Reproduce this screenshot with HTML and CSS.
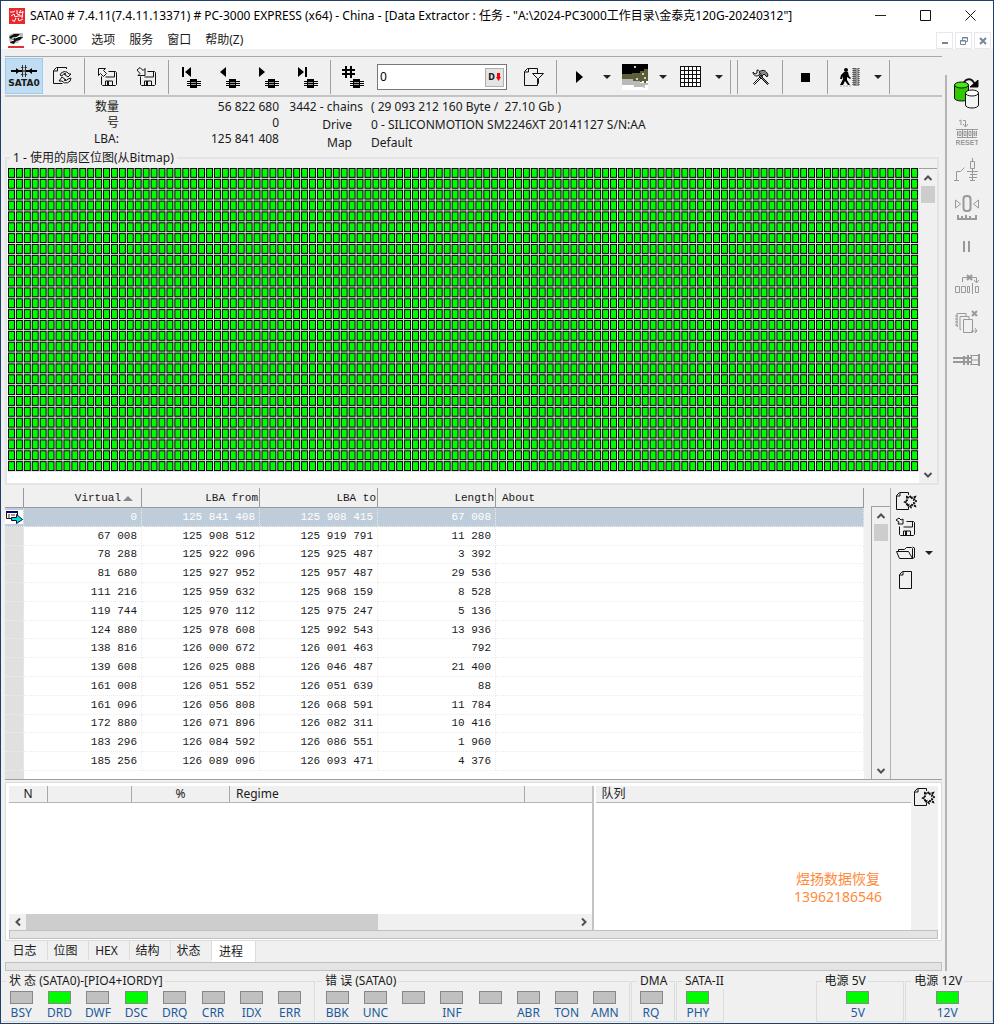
FILE: index.html
```html
<!DOCTYPE html>
<html lang="zh-CN">
<head>
    <meta charset="UTF-8">
    <meta name="viewport" content="width=device-width, initial-scale=1.0">
    <title>PC-3000 EXPRESS</title>
    <link rel="stylesheet" href="styles.css">
</head>
<body>
    <!-- shared icon shapes -->
    <svg class="sprite" aria-hidden="true">
        <symbol id="chip" viewBox="0 0 14 9">
            <path d="M0 2.5h14M0 4.5h14M0 6.5h14" stroke="#000" fill="none"/>
            <path d="M3 0h7v9h-7z" fill="#000"/>
            <path d="M4 3.5h5M4 5.5h5" stroke="#999" fill="none"/>
        </symbol>
        <symbol id="floppy" viewBox="0 0 16 15">
            <path d="M.5 5.5v8l1 1h13l1-1v-12l-1-1h-7M13.5 1v5h-9M4.5 14v-4h7v4" fill="none" stroke="#111"/>
            <path d="M6 10h2v4h-2z" fill="#111"/>
        </symbol>
        <symbol id="new-page" viewBox="0 0 22 20">
            <path d="M13.5 4V1.500h-9l-3 3v14h12v-3M1.500 5h3.500v-3" fill="none" stroke="#111"/>
            <path d="M12 6l2 1 2-2 1 2 3-1-1 3 2 1-2 2 1 3-3-1-1 2-2-2-2 1v-3l-2-1 2-2z" fill="#f0f0f0" stroke="#111" stroke-width="2" stroke-dasharray="2 1"/>
        </symbol>
        <symbol id="arrow-down" viewBox="0 0 8 4"><path d="M0 0h8l-4 4z" fill="#222"/></symbol>
        <symbol id="chevron" viewBox="0 0 10 8"><path d="M1.500 6l3.500-3.500 3.500 3.500" fill="none" stroke="#505050" stroke-width="2"/></symbol>
    </svg>

    <div class="window">
        <header class="title-bar">
            <svg width="16" height="16" viewBox="0 0 16 16">
                <rect width="16" height="16" fill="#e8282c"/>
                <path d="M1 4h3l2-1M2 8l3-2 1 3 3-1M8 2v4l3 1M12 2l-2 3 4-1M14 3l-1 7M9 8h5M7 10l-2 4M9 10l1 3 4-2M3 12l2 1" stroke="#fff" fill="none"/>
            </svg>
            <h1>SATA0 # 7.4.11(7.4.11.13371) # PC-3000 EXPRESS (x64) - China - [Data Extractor : 任务 - "A:\2024-PC3000工作目录\金泰克120G-20240312"]</h1>
            <div class="window-buttons">
                <button type="button" aria-label="Minimize"><svg width="11" height="11"><path d="M0 5.500h11" stroke="#222"/></svg></button>
                <button type="button" aria-label="Maximize"><svg width="11" height="11"><path d="M.5.5h10v10h-10z" fill="none" stroke="#111"/></svg></button>
                <button type="button" aria-label="Close"><svg width="11" height="11"><path d="M.5.5l10 10M10.500.5l-10 10" stroke="#111"/></svg></button>
            </div>
        </header>

        <nav class="menu-bar">
            <svg width="16" height="16" viewBox="0 0 16 16">
                <path d="M1 3l5-2h9v5l-3 1-2 4H2l-1-4z" fill="#bbb"/>
                <path d="M1 5l5-3h6l-3 3H5l-2 2zM4 8l4-3h7l-3 3-4 1-2 3-4-1z" fill="#111"/>
                <path d="M7 6l5-2M3 9l3-1" stroke="#fff"/>
                <path d="M0 15h16" stroke="#e03030" stroke-width="2"/>
            </svg>
            <button type="button">PC-3000</button>
            <button type="button">选项</button>
            <button type="button">服务</button>
            <button type="button">窗口</button>
            <button type="button">帮助(Z)</button>
            <div class="child-buttons">
                <button type="button" aria-label="Minimize child"><svg width="8" height="8"><path d="M1 6h6" stroke="#74879a" stroke-width="2"/></svg></button>
                <button type="button" aria-label="Restore child"><svg width="8" height="8"><path d="M2.500 3V.5h5v4H5M2 1h6M.5 3.500h5v4h-5zM0 4h6" fill="none" stroke="#74879a"/></svg></button>
                <button type="button" aria-label="Close child"><svg width="8" height="8"><path d="M1 1l6 6M7 1l-6 6" stroke="#74879a" stroke-width="2"/></svg></button>
            </div>
        </nav>

        <div class="workspace">
            <main class="main">
                <div class="toolbar">
                    <div class="tool-group first">
                        <button type="button" class="tool active">
                            <svg width="26" height="13" viewBox="0 0 26 13"><path d="M0 6h26" stroke="#000" stroke-width="2"/><path d="M5 3l4 3-4 3zM21 3l-4 3 4 3z"/><path d="M10 2.500h6M10 9.500h6M11.500 0v12M14.500 0v12" stroke="#333"/><path d="M13 2v8" stroke="#ccc"/></svg>
                            <span>SATA0</span>
                        </button>
                        <button type="button" class="tool" aria-label="Refresh">
                            <svg width="22" height="20" viewBox="0 0 22 20" fill="none" stroke="#111"><path d="M14.500 3V1.500h-10l-3 3v13h9M1.500 5h4V2"/><path d="M8 9a5 5 0 0 1 9-1h2l-3 3-4-3h2a3 3 0 0 0-4 2zM19 12a5 5 0 0 1-9 3H7l3-4 4 3h-2a3 3 0 0 0 4-1z"/></svg>
                        </button>
                    </div>
                    <div class="tool-group">
                        <button type="button" class="tool" aria-label="Export">
                            <svg width="20" height="20"><use href="#floppy" x="4" y="4" width="16" height="15"/><path d="M1.500 1.500h7l-2 2 3 3-3 3-3-3-2 2z" fill="#f0f0f0" stroke="#111"/></svg>
                        </button>
                        <button type="button" class="tool" aria-label="Save">
                            <svg width="20" height="20"><use href="#floppy" x="4" y="4" width="16" height="15"/><path d="M1 3l3-2.500 3 3 2-2v7H2l2-2z" fill="#f0f0f0" stroke="#111"/></svg>
                        </button>
                    </div>
                    <div class="tool-group">
                        <button type="button" class="tool" aria-label="First"><svg width="20" height="22"><path d="M1 1h2v10h-2zM10 1v10l-6-5z"/><use href="#chip" x="6" y="13" width="14" height="9"/></svg></button>
                        <button type="button" class="tool" aria-label="Previous"><svg width="20" height="22"><path d="M6 1v10l-6-5z"/><use href="#chip" x="6" y="13" width="14" height="9"/></svg></button>
                        <button type="button" class="tool" aria-label="Next"><svg width="20" height="22"><path d="M0 1v10l6-5z"/><use href="#chip" x="6" y="13" width="14" height="9"/></svg></button>
                        <button type="button" class="tool" aria-label="Last"><svg width="20" height="22"><path d="M0 1v10l6-5zM7 1h2v10H7z"/><use href="#chip" x="6" y="13" width="14" height="9"/></svg></button>
                    </div>
                    <div class="tool-group">
                        <button type="button" class="tool" aria-label="Go to sector"><svg width="22" height="22"><path d="M4 0v12M9 0v12M0 4h13M0 8h13" stroke="#000" stroke-width="2"/><use href="#chip" x="8" y="13" width="14" height="9"/></svg></button>
                        <div class="sector-box">
                            <input type="text" value="0" aria-label="Sector">
                            <button type="button">D<svg width="5" height="8"><path d="M1 0h3v4h1L2.500 8 0 4h1z" fill="#f00"/></svg></button>
                        </div>
                        <button type="button" class="tool" aria-label="Filter"><svg width="22" height="20" fill="none" stroke="#111"><path d="M14.500 6V1.500h-10l-3 3v14h13v-3M1.500 5h4V2"/><path d="M9.500 6.500h11l-5 5v5l-1-1v-4z" fill="#f0f0f0"/></svg></button>
                    </div>
                    <div class="tool-group">
                        <button type="button" class="tool" aria-label="Run"><svg width="7" height="12"><path d="M0 0l7 6-7 6z"/></svg></button>
                        <button type="button" class="more" aria-label="Run options"><svg width="8" height="4"><use href="#arrow-down"/></svg></button>
                        <button type="button" class="tool" aria-label="Sector map">
                            <svg width="26" height="26" shape-rendering="crispEdges"><path d="M0 0h26v26H0z" fill="#fff"/><path d="M0 0h26v12H0z"/><path d="M0 10h10V9h8V7h4V5h4v12H0z" fill="#5d5d39"/><path d="M0 15h11v2h7v2h8v2h-3v2H12v-2H0z" fill="#b9b9b9"/><path d="M12 2h2v2h-2zM20 9h2v2h-2zM14 14h2v2h-2zM22 13h2v2h-2zM21 22h2v2h-2z" fill="#ccc"/><path d="M16 12h2v2h-2zM18 16h2v2h-2zM22 17h2v2h-2z" fill="#5d5d39"/></svg>
                        </button>
                        <button type="button" class="more" aria-label="Map options"><svg width="8" height="4"><use href="#arrow-down"/></svg></button>
                        <button type="button" class="tool" aria-label="Grid"><svg width="22" height="22" shape-rendering="crispEdges"><path d="M1 1h20v20H1z" fill="#fff"/><path d="M.5.5h20v20H.5zM4.500 0v21M8.500 0v21M12.500 0v21M16.500 0v21M0 4.500h21M0 8.500h21M0 12.500h21M0 16.500h21" fill="none" stroke="#111"/></svg></button>
                        <button type="button" class="more" aria-label="Grid options"><svg width="8" height="4"><use href="#arrow-down"/></svg></button>
                    </div>
                    <div class="tool-group blank"></div>
                    <div class="tool-group">
                        <button type="button" class="tool" aria-label="Tools"><svg width="17" height="16" fill="none" stroke="#111"><path d="M1.500 14.500l8-8 1 1-8 8z" fill="#fff"/><path d="M6.500 6.500l1-1 9 9-1 1z" fill="#888"/><path d="M1 3l2 2 2-1V1c3 0 4 3 2 5S1 7 1 3z" fill="#ddd"/><path d="M7 3c4-3 7-2 9 3l-1 2-3-3-2 2-2-3z" fill="#888"/></svg></button>
                    </div>
                    <div class="tool-group">
                        <button type="button" class="tool" aria-label="Stop"><svg width="9" height="9"><path d="M0 0h9v9H0z"/></svg></button>
                    </div>
                    <div class="tool-group">
                        <button type="button" class="tool" aria-label="Exit"><svg width="20" height="20"><circle cx="6" cy="3" r="2"/><path d="M4 5h4l1 4 2 2-1 1-3-2v3l3 5H8l-3-4-2 4H0l3-6V9l-1 3H0l1-4z"/><path d="M13 1h6v18h-6z" fill="#999"/><path d="M13 1v18M19 1v18M15 1v18" stroke="#222" stroke-dasharray="1 1"/><path d="M0 19h12" stroke="#aaa" stroke-dasharray="2 1"/></svg></button>
                        <button type="button" class="more" aria-label="Exit options"><svg width="8" height="4"><use href="#arrow-down"/></svg></button>
                    </div>
                </div>

                <section class="info">
                    <dl class="counts">
                        <dt>数量</dt><dd>56 822 680</dd>
                        <dt>号</dt><dd>0</dd>
                        <dt>LBA:</dt><dd>125 841 408</dd>
                    </dl>
                    <dl class="device">
                        <dt class="wide">3442 - chains</dt><dd>( 29 093 212 160 Byte /&nbsp; 27.10 Gb )</dd>
                        <dt>Drive</dt><dd>0 - SILICONMOTION SM2246XT 20141127 S/N:AA</dd>
                        <dt>Map</dt><dd>Default</dd>
                    </dl>
                </section>

                <fieldset class="bitmap">
                    <legend>1 - 使用的扇区位图(从Bitmap)</legend>
                    <div class="bitmap-body">
                        <svg class="cells" viewBox="0 0 920 308" preserveAspectRatio="none">
                            <defs>
                                <pattern id="cell" width="8" height="11" patternUnits="userSpaceOnUse">
                                    <rect width="8" height="11" fill="#e4e4e4"/>
                                    <rect width="7" height="10" fill="#000"/>
                                    <rect x="1" y="1" width="5" height="8" fill="#00fc00"/>
                                </pattern>
                            </defs>
                            <rect width="920" height="308" fill="url(#cell)"/>
                        </svg>
                        <div class="scroll">
                            <button type="button" aria-label="Scroll up"><svg width="10" height="8"><use href="#chevron"/></svg></button>
                            <div class="thumb"></div>
                            <button type="button" class="down" aria-label="Scroll down"><svg width="10" height="8"><use href="#chevron"/></svg></button>
                        </div>
                    </div>
                </fieldset>

                <section class="chains">
                    <div class="chains-table">
                        <table>
                            <colgroup><col class="mark"><col class="num"><col class="num"><col class="num"><col class="num"><col></colgroup>
                            <thead>
                                <tr><th></th><th class="sorted">Virtual<svg width="10" height="5"><path d="M5 0l5 5H0z" fill="#888"/></svg></th><th>LBA from</th><th>LBA to</th><th>Length</th><th class="about">About</th></tr>
                            </thead>
                            <tbody>
                                <tr class="selected"><td><svg width="18" height="14" viewBox="0 0 18 14"><path d="M1.500 1.500h11v7h-11z" fill="#fff" stroke="#111"/><path d="M1 1h12v2H1z" fill="#000080"/><path d="M3 5h2M6 5h4M3 7h2" stroke="#333"/><path d="M6.500 7.500h5v-3l6 5-6 4v-3h-5z" fill="#00e0e8" stroke="#111"/></svg></td><td>0</td><td>125 841 408</td><td>125 908 415</td><td>67 008</td><td></td></tr>
                                <tr><td></td><td>67 008</td><td>125 908 512</td><td>125 919 791</td><td>11 280</td><td></td></tr>
                                <tr><td></td><td>78 288</td><td>125 922 096</td><td>125 925 487</td><td>3 392</td><td></td></tr>
                                <tr><td></td><td>81 680</td><td>125 927 952</td><td>125 957 487</td><td>29 536</td><td></td></tr>
                                <tr><td></td><td>111 216</td><td>125 959 632</td><td>125 968 159</td><td>8 528</td><td></td></tr>
                                <tr><td></td><td>119 744</td><td>125 970 112</td><td>125 975 247</td><td>5 136</td><td></td></tr>
                                <tr><td></td><td>124 880</td><td>125 978 608</td><td>125 992 543</td><td>13 936</td><td></td></tr>
                                <tr><td></td><td>138 816</td><td>126 000 672</td><td>126 001 463</td><td>792</td><td></td></tr>
                                <tr><td></td><td>139 608</td><td>126 025 088</td><td>126 046 487</td><td>21 400</td><td></td></tr>
                                <tr><td></td><td>161 008</td><td>126 051 552</td><td>126 051 639</td><td>88</td><td></td></tr>
                                <tr><td></td><td>161 096</td><td>126 056 808</td><td>126 068 591</td><td>11 784</td><td></td></tr>
                                <tr><td></td><td>172 880</td><td>126 071 896</td><td>126 082 311</td><td>10 416</td><td></td></tr>
                                <tr><td></td><td>183 296</td><td>126 084 592</td><td>126 086 551</td><td>1 960</td><td></td></tr>
                                <tr><td></td><td>185 256</td><td>126 089 096</td><td>126 093 471</td><td>4 376</td><td></td></tr>
                            </tbody>
                        </table>
                        <div class="row-stub"></div>
                    </div>
                    <div class="scroll table-scroll">
                        <button type="button" aria-label="Scroll up"><svg width="10" height="8"><use href="#chevron"/></svg></button>
                        <div class="thumb"></div>
                        <button type="button" class="down" aria-label="Scroll down"><svg width="10" height="8"><use href="#chevron"/></svg></button>
                    </div>
                    <div class="chain-tools">
                        <button type="button" aria-label="New list"><svg width="22" height="20"><use href="#new-page"/></svg></button>
                        <button type="button" aria-label="Save list"><svg width="22" height="20"><use href="#floppy" x="4" y="4" width="16" height="15"/><path d="M1 3l3-2 2 2 2-1v5H3l1-2z" fill="#f0f0f0" stroke="#111"/></svg></button>
                        <div class="open-row">
                            <button type="button" aria-label="Open list"><svg width="22" height="14" fill="none" stroke="#111"><path d="M17.500 12.500h-13l-3-7h12l4 7V2.500l-1-1h-5l-2 2h-6v2M17.500 12.500l2-1V2l-2-1"/></svg></button>
                            <button type="button" aria-label="Open options"><svg width="8" height="4"><use href="#arrow-down"/></svg></button>
                        </div>
                        <button type="button" aria-label="Blank page"><svg width="22" height="19" fill="none" stroke="#111"><path d="M4.500 4.500l3-3h9v17h-12zM4.500 5h3.500V2"/></svg></button>
                    </div>
                </section>

                <section class="process">
                    <div class="process-body">
                        <div class="tasks">
                            <table>
                                <colgroup><col class="n"><col class="blank"><col class="percent"><col><col class="last"></colgroup>
                                <thead><tr><th>N</th><th></th><th>%</th><th class="regime">Regime</th><th></th></tr></thead>
                            </table>
                            <div class="hscroll">
                                <button type="button" aria-label="Scroll left"><svg width="10" height="8"><use href="#chevron"/></svg></button>
                                <div class="track"><div class="hthumb"></div></div>
                                <button type="button" class="right" aria-label="Scroll right"><svg width="10" height="8"><use href="#chevron"/></svg></button>
                            </div>
                        </div>
                        <div class="queue">
                            <h2>队列</h2>
                            <p>煜扬数据恢复<br>13962186546</p>
                        </div>
                        <div class="queue-tools">
                            <button type="button" aria-label="New task"><svg width="22" height="20"><use href="#new-page"/></svg></button>
                        </div>
                    </div>
                    <div class="splitter"></div>
                </section>

                <div class="tabs" role="tablist">
                    <button type="button" role="tab">日志</button>
                    <button type="button" role="tab">位图</button>
                    <button type="button" role="tab">HEX</button>
                    <button type="button" role="tab">结构</button>
                    <button type="button" role="tab">状态</button>
                    <button type="button" role="tab" class="current" aria-selected="true">进程</button>
                </div>
                <div class="splitter"></div>
            </main>

            <aside class="side-tools">
                <button type="button" aria-label="Power">
                    <svg width="28" height="32" viewBox="0 0 28 32" stroke="#111"><path d="M1.500 7v13c0 4 14 4 14 0V7" fill="#31c800"/><ellipse cx="8.500" cy="7" rx="7" ry="3" fill="#45e810"/><path d="M12.500 15v12c0 4 13 4 13 0V15" fill="#f4f4f4"/><ellipse cx="19" cy="15" rx="6.500" ry="3" fill="#fff"/><path d="M11 4c4-5 9-3 11 3" fill="none" stroke-width="2"/><path d="M25 2v7h-8z" fill="#000"/></svg>
                </button>
                <button type="button" aria-label="Reset">
                    <svg width="22" height="26" viewBox="0 0 22 26" fill="none" stroke="#999"><path d="M3 2l2-1v5M7 1.500h2.500v6M7 5l2.500 3L12 5M0 10.500h22M1 18.500h20M1.500 12v5M20.500 12v5M6.500 11v7M11.500 11v7M16.500 11v7M3 12.500h2v4H3zM8 12.500h2v4H8zM13 12.500h2v4h-2zM18 12.500h1v4h-1z"/><text x="11" y="26" text-anchor="middle" fill="#999" stroke="none">RESET</text></svg>
                </button>
                <button type="button" aria-label="Power switch">
                    <svg width="26" height="24" viewBox="0 0 26 24" fill="none" stroke="#999"><path d="M0 22.500h5M2.500 22V13.500h4l4-4M18.500 0v3M16.500 3.500h4v7h-4zM18.500 11v12M13 13.500h11M16 16.500h7M15 19.500h8M16 22.500h5"/></svg>
                </button>
                <button type="button" aria-label="Recalibrate">
                    <svg width="26" height="26" viewBox="0 0 26 26" fill="none" stroke="#999"><path d="M1.500 5v8l5-4zM24.500 5v8l-5-4z"/><rect x="9.500" y="1" width="7" height="15" rx="3" stroke-width="2"/><path d="M3 24h20M4 20v4M8 21v3M12 20v4M16 21v3M22 20v4" stroke-width="2"/></svg>
                </button>
                <button type="button" aria-label="Pause"><svg width="8" height="11"><path d="M1 0v11M6 0v11" stroke="#999" stroke-width="2"/></svg></button>
                <button type="button" aria-label="Skip">
                    <svg width="24" height="20" viewBox="0 0 24 20" fill="none" stroke="#999"><path d="M7.500 8V3.500h14V8M19 6l2.500 3L24 6M.5 12.500h4v6h-4zM6.500 12.500h4v6h-4zM12.500 12.500h2v6h-2zM17.500 9v11M20.500 12.500h3v6h-3z"/><path d="M12 1l5 5M17 1l-5 5" stroke-width="2"/></svg>
                </button>
                <button type="button" aria-label="Discard">
                    <svg width="24" height="24" viewBox="0 0 24 24" fill="none" stroke="#999"><path d="M8.500 9.500h9v13h-9zM6 19.500h-1v-13h9v3M3 16.500H2v-13h9v3M0 6h3M0 9h3M0 12h3M0 15h3M16 21h6M20 18l2 3-2 2"/><path d="M17 1l5 5M22 1l-5 5" stroke-width="2"/></svg>
                </button>
                <button type="button" aria-label="Connector">
                    <svg width="28" height="12" viewBox="0 0 28 12" fill="none" stroke="#999"><path d="M0 4h18M0 8h18" stroke-width="2"/><path d="M17 1.500h9M17 10.500h9M19 6h7M18.500 1v10"/><path d="M11 2v9M15 1v10M26 0v12" stroke-width="2"/></svg>
                </button>
            </aside>
        </div>

        <footer class="status-bar">
            <fieldset class="leds status">
                <legend>状 态 (SATA0)-[PIO4+IORDY]</legend>
                <span class="led">BSY</span><span class="led on">DRD</span><span class="led">DWF</span><span class="led on">DSC</span><span class="led">DRQ</span><span class="led">CRR</span><span class="led">IDX</span><span class="led">ERR</span>
            </fieldset>
            <fieldset class="leds errors">
                <legend>错 误 (SATA0)</legend>
                <span class="led">BBK</span><span class="led">UNC</span><span class="led"></span><span class="led">INF</span><span class="led"></span><span class="led">ABR</span><span class="led">TON</span><span class="led">AMN</span>
            </fieldset>
            <fieldset class="leds">
                <legend>DMA</legend>
                <span class="led">RQ</span>
            </fieldset>
            <fieldset class="leds">
                <legend>SATA-II</legend>
                <span class="led on">PHY</span>
            </fieldset>
            <fieldset class="leds power5">
                <legend>电源 5V</legend>
                <span class="led on">5V</span>
            </fieldset>
            <fieldset class="leds power12">
                <legend>电源 12V</legend>
                <span class="led on">12V</span>
            </fieldset>
        </footer>
    </div>
</body>
</html>
```
FILE: styles.css
```css
* {
    box-sizing: border-box;
}
body {
    margin: 0;
    background: #f0f0f0;
    color: #1a1a1a;
    font-family: "Noto Sans", "Noto Sans CJK SC", sans-serif;
    font-size: 12px;
    line-height: 16px;
}
button {
    display: flex;
    align-items: center;
    justify-content: center;
    flex: none;
    padding: 0;
    border: 0;
    background: none;
    color: inherit;
    font: inherit;
}
h1, h2, p, dl, dd {
    margin: 0;
    font-size: 12px;
    font-weight: normal;
}
fieldset {
    min-width: 0;
    margin: 0;
    padding: 0;
    border: 1px solid #dcdcdc;
}
table {
    width: 100%;
    border-collapse: separate;
    border-spacing: 0;
    table-layout: fixed;
}
.sprite {
    display: none;
}
.window {
    display: flex;
    flex-direction: column;
    min-height: 100vh;
    border: 1px solid #1f4068;
}

/* title and menu */
.title-bar, .menu-bar {
    display: flex;
    align-items: center;
    background: #fff;
}
.title-bar {
    height: 29px;
    padding-left: 8px;
}
.title-bar h1 {
    flex: 1;
    min-width: 0;
    margin-left: 5px;
    overflow: hidden;
    white-space: nowrap;
    color: #000;
}
.window-buttons {
    display: flex;
}
.window-buttons button {
    width: 45px;
    height: 28px;
}
.menu-bar {
    height: 19px;
    padding-left: 7px;
    gap: 14px;
}
.menu-bar > svg {
    margin-right: -7px;
}
.child-buttons {
    display: flex;
    gap: 2px;
    margin-left: auto;
    padding-right: 2px;
    align-self: flex-end;
}
.child-buttons button {
    width: 17px;
    height: 17px;
    border: 1px solid #e6e8ec;
}

/* columns */
.workspace {
    display: flex;
    flex: 1;
    padding: 7px 0 2px 4px;
}
.main {
    display: flex;
    flex-direction: column;
    flex: 1;
    min-width: 0;
}
.side-tools {
    display: flex;
    flex-direction: column;
    width: 48px;
    margin: 19px 0 0 3px;
    border-left: 2px solid #b4b4b4;
}
.side-tools button {
    width: 40px;
    height: 38px;
}
.side-tools text {
    font: bold 7px "Liberation Sans", sans-serif;
}

/* toolbar */
.toolbar {
    display: flex;
    height: 41px;
    border-top: 1px solid #a8a8a8;
    border-bottom: 2px solid #c4c4c4;
}
.tool-group {
    display: flex;
    align-items: center;
    gap: 1px;
    margin: 3px 0 1px;
    padding: 0 3px;
    border-right: 1px solid #a0a0a0;
}
.tool-group.first {
    margin-top: 1px;
    padding: 0 2px 0 0;
}
.tool {
    flex-direction: column;
    width: 38px;
    height: 36px;
}
.tool.active {
    border: 1px solid #99cdf2;
    background: #c0dcf3;
}
.tool.active span {
    font: bold 9px/10px "DejaVu Sans", sans-serif;
}
.more {
    width: 16px;
    height: 36px;
}
.sector-box {
    display: flex;
    align-items: center;
    width: 130px;
    height: 26px;
    margin: 0 7px 0 4px;
    padding: 2px;
    border: 1px solid #777;
    background: #fff;
}
.sector-box input {
    flex: 1;
    min-width: 0;
    padding: 0;
    border: 0;
    outline: 0;
    font: inherit;
}
.sector-box button {
    width: 19px;
    height: 19px;
    border: 1px solid #b0b0b0;
    background: #e4e4e4;
    font: bold 8px "DejaVu Sans", sans-serif;
    gap: 1px;
}

/* counters */
.info {
    display: flex;
    height: 53px;
    padding-top: 2px;
}
.counts {
    display: grid;
    grid-template-columns: 114px 160px;
    grid-auto-rows: 16px;
    text-align: right;
}
.device {
    display: grid;
    grid-template-columns: 84px 288px;
    grid-auto-rows: 18px;
    column-gap: 8px;
    white-space: nowrap;
}
.device dt {
    padding-right: 11px;
    text-align: right;
}
.device dt.wide {
    padding-right: 0;
}
.device dd {
    overflow: hidden;
}

/* sector bitmap */
.bitmap {
    margin-right: 3px;
    border: 2px solid #e4e4e4;
}
.bitmap legend {
    margin-left: 3px;
    padding: 0 3px;
}
.bitmap-body {
    display: flex;
    height: 315px;
    margin-top: 2px;
    background: #fff;
}
.cells {
    flex: 1;
    min-width: 0;
    height: 304px;
    margin-left: 1px;
}
.scroll {
    display: flex;
    flex-direction: column;
    width: 18px;
    flex: none;
    border-top: 1px solid #a0a0a0;
    background: #f0f0f0;
}
.scroll button {
    height: 17px;
}
.scroll .thumb {
    height: 17px;
    margin: 0 2px;
    background: #cdcdcd;
}
.scroll .down {
    margin-top: auto;
}
.down svg {
    transform: rotate(180deg);
}

/* chain list */
.chains {
    display: flex;
    margin-top: 3px;
    border-bottom: 1px solid #a0a0a0;
}
.chains-table {
    flex: 1;
    min-width: 0;
    background: #fff;
}
.chains-table table {
    height: 283px;
    font-family: "Liberation Mono", monospace;
    font-size: 11px;
}
.chains col.mark {
    width: 19px;
}
.chains col.num {
    width: 118px;
}
.chains th {
    height: 20px;
    padding: 0 1px;
    border-right: 1px solid #999;
    border-bottom: 1px solid #999;
    background: #f0f0f0;
    font-weight: normal;
    text-align: right;
}
.chains th.sorted {
    padding-right: 8px;
}
.chains th svg {
    margin-left: 2px;
}
.chains th.about {
    padding-left: 6px;
    text-align: left;
}
.chains td {
    padding: 0 4px;
    border-right: 1px dotted #ececec;
    border-bottom: 1px dotted #ececec;
    line-height: 14px;
    text-align: right;
}
.chains td:first-child {
    padding: 0;
    background: #e0e0e0;
}
.chains td svg {
    display: block;
    background: #fff;
}
.chains .selected td {
    background: #bfccda;
    color: #fff;
}
.row-stub {
    width: 19px;
    height: 8px;
    background: #e0e0e0;
}
.table-scroll {
    margin: 18px 0 0 7px;
    width: 19px;
    border-left: 1px solid #a0a0a0;
}
.chain-tools {
    width: 52px;
    padding-left: 4px;
    border-left: 1px solid #b0b0b0;
}
.chain-tools button {
    height: 26px;
}
.open-row {
    display: flex;
    gap: 8px;
}

/* process page */
.process {
    margin: 2px 0 0;
    padding: 3px 3px 1px;
    border: 1px solid #dcdcdc;
    background: #fff;
}
.process-body {
    display: flex;
    height: 144px;
}
.tasks {
    display: flex;
    flex-direction: column;
    flex: 586;
    min-width: 0;
    border-right: 2px solid #c4c4c4;
}
.process col.n {
    width: 39px;
}
.process col.blank {
    width: 84px;
}
.process col.percent {
    width: 98px;
}
.process col.last {
    width: 67px;
}
.process th {
    height: 17px;
    padding: 0;
    border-right: 1px solid #a8a8a8;
    border-bottom: 1px solid #b4b4b4;
    background: #f0f0f0;
    font-weight: normal;
    line-height: 16px;
}
.process th:last-child {
    border-right: 0;
}
.process th.regime {
    padding-left: 6px;
    text-align: left;
}
.hscroll {
    display: flex;
    height: 16px;
    margin-top: auto;
    background: #f0f0f0;
}
.hscroll button {
    width: 17px;
}
.hscroll button svg {
    transform: rotate(-90deg);
}
.hscroll .right svg {
    transform: rotate(90deg);
}
.track {
    flex: 1;
}
.hthumb {
    width: 64%;
    height: 16px;
    background: #cdcdcd;
}
.queue {
    display: flex;
    flex-direction: column;
    flex: 316;
    min-width: 0;
    padding-left: 2px;
}
.queue h2 {
    height: 17px;
    padding-left: 5px;
    border-bottom: 1px solid #b4b4b4;
    background: #f0f0f0;
    line-height: 16px;
}
.queue p {
    margin: auto 29px 24px auto;
    color: #ff8a3c;
    font-size: 14px;
    line-height: 18px;
    text-align: center;
}
.queue-tools {
    width: 27px;
    padding: 1px 2px;
    background: #f0f0f0;
}
.splitter {
    height: 9px;
    border: 1px solid #c0c0c0;
    background: #e4e4e4;
}
.tabs {
    display: flex;
    height: 21px;
    padding-left: 2px;
}
.tabs button {
    width: 41px;
    height: 19px;
    border-right: 1px solid #dcdcdc;
    padding-right: 5px;
}
.tabs .current {
    width: 44px;
    height: 21px;
    background: #fff;
}

/* status leds */
.status-bar {
    display: grid;
    grid-template-columns: 315fr 315fr 44fr 48fr 90fr 89fr 88fr;
    column-gap: 1px;
    padding-bottom: 1px;
}
.leds {
    display: flex;
    padding: 0 5px 0 1px;
    height: 49px;
}
.status, .errors {
    border-left-color: transparent;
}
.status {
    padding-left: 0;
}
.leds legend {
    padding: 0 2px 0 3px;
    margin-left: 4px;
    white-space: nowrap;
}
.led {
    display: flex;
    flex: 1;
    flex-direction: column;
    align-items: center;
    min-width: 0;
    color: #1d5a9a;
}
.led::before {
    content: "";
    flex: none;
    width: 21px;
    height: 11px;
    margin: 2px 0 1px;
    border: 1px solid #888;
    background: #c0c0c0;
}
.led.on::before {
    background: #00fc00;
}
.power5 {
    grid-column: 6;
}
.power12 {
    grid-column: 7;
}
```
